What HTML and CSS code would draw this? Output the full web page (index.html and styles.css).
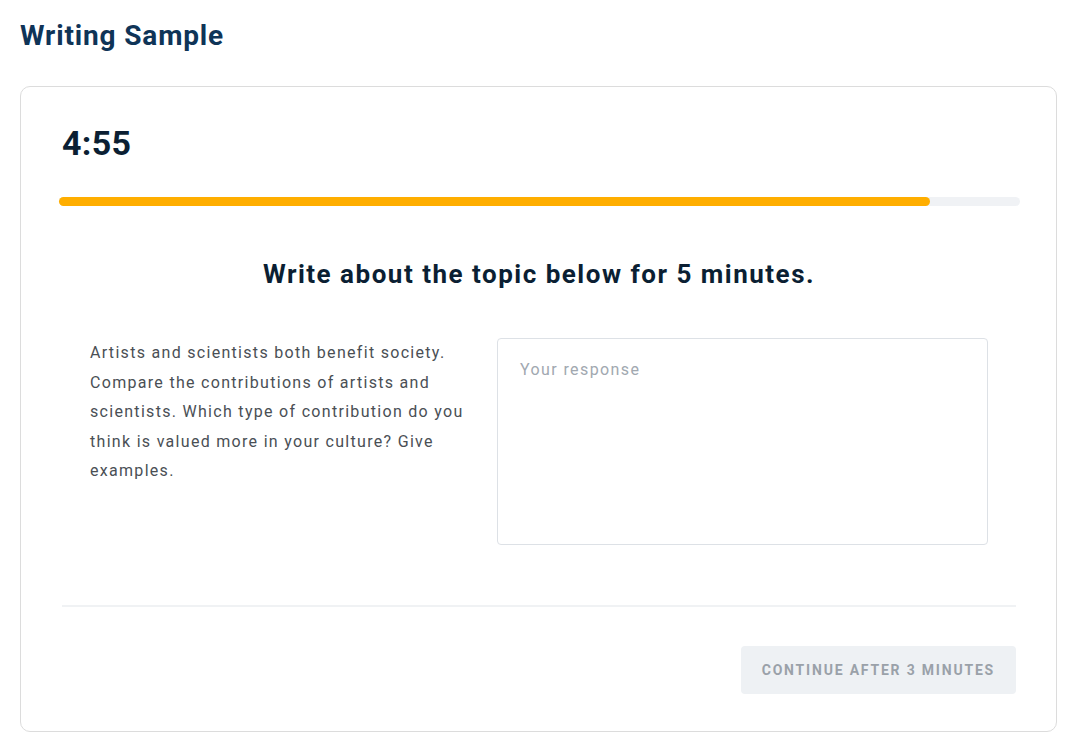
FILE: index.html
```html
<!DOCTYPE html>
<html lang="en">
<head>
  <meta charset="UTF-8">
  <meta name="viewport" content="width=device-width, initial-scale=1.0">
  <title>Writing Sample</title>
  <link rel="stylesheet" href="styles.css">
</head>
<body>
  <div class="page">
    <h1 class="page-title">Writing Sample</h1>

    <div class="card">
      <div class="timer">4:55</div>
      <div class="progress">
        <div class="progress-fill" style="width: 90.6%"></div>
      </div>

      <h2 class="question-title">Write about the topic below for 5 minutes.</h2>

      <div class="question-body">
        <p class="prompt">Artists and scientists both benefit society. Compare the contributions of artists and scientists. Which type of contribution do you think is valued more in your culture? Give examples.</p>
        <textarea class="response" placeholder="Your response"></textarea>
      </div>

      <div class="card-footer">
        <button class="continue-btn" disabled>Continue after 3 minutes</button>
      </div>
    </div>
  </div>
</body>
</html>
```

FILE: styles.css
```css
body {
  font-family: Roboto, 'Noto Sans', sans-serif;
  color: #0b1f33;
  background: #fff;
  margin: 0;
}
.page {
  padding: 16px 22px 5px 20px;
}
.page-title {
  margin: 0 0 30px;
  font-size: 28px;
  line-height: 40px;
  font-weight: 700;
  letter-spacing: 0.85px;
  color: #0f3457;
}
.card {
  border: 1px solid #dcdcdc;
  border-radius: 10px;
  padding: 34px 40px 37px 41px;
}
.timer {
  font-size: 34px;
  line-height: 44px;
  font-weight: 700;
  letter-spacing: 0.3px;
  color: #0b1f33;
  margin-bottom: 32px;
}
.progress {
  height: 9px;
  margin: 0 -4px 0 -3px;
  border-radius: 5px;
  background-color: #f0f2f5;
}
.progress-fill {
  height: 100%;
  border-radius: 5px;
  background-color: #ffae00;
}
.question-title {
  margin: 52px 0 48px;
  font-size: 26px;
  line-height: 32px;
  font-weight: 700;
  letter-spacing: 1.5px;
  text-align: center;
  color: #0b1f33;
}
.question-body {
  display: flex;
  justify-content: space-between;
  padding: 0 28px 0 28px;
}
.prompt {
  width: 380px;
  margin: 0;
  font-size: 16px;
  line-height: 29.6px;
  letter-spacing: 1.3px;
  color: #4a4f55;
}
.response {
  width: 491px;
  height: 207px;
  box-sizing: border-box;
  padding: 21px 22px;
  border: 1px solid #dde1e6;
  border-radius: 4px;
  font-family: inherit;
  font-size: 16px;
  letter-spacing: 1.4px;
  color: #0b1f33;
  resize: none;
}
.response::placeholder {
  color: #a1a8b0;
}
.card-footer {
  display: flex;
  justify-content: flex-end;
  margin-top: 60px;
  padding-top: 39px;
  border-top: 2px solid #f0f2f4;
}
.continue-btn {
  padding: 0 21px;
  height: 48px;
  border: none;
  border-radius: 4px;
  background-color: #eef1f4;
  color: #9aa1a9;
  font-family: inherit;
  font-size: 14px;
  font-weight: 700;
  letter-spacing: 1.8px;
  text-transform: uppercase;
}
```
